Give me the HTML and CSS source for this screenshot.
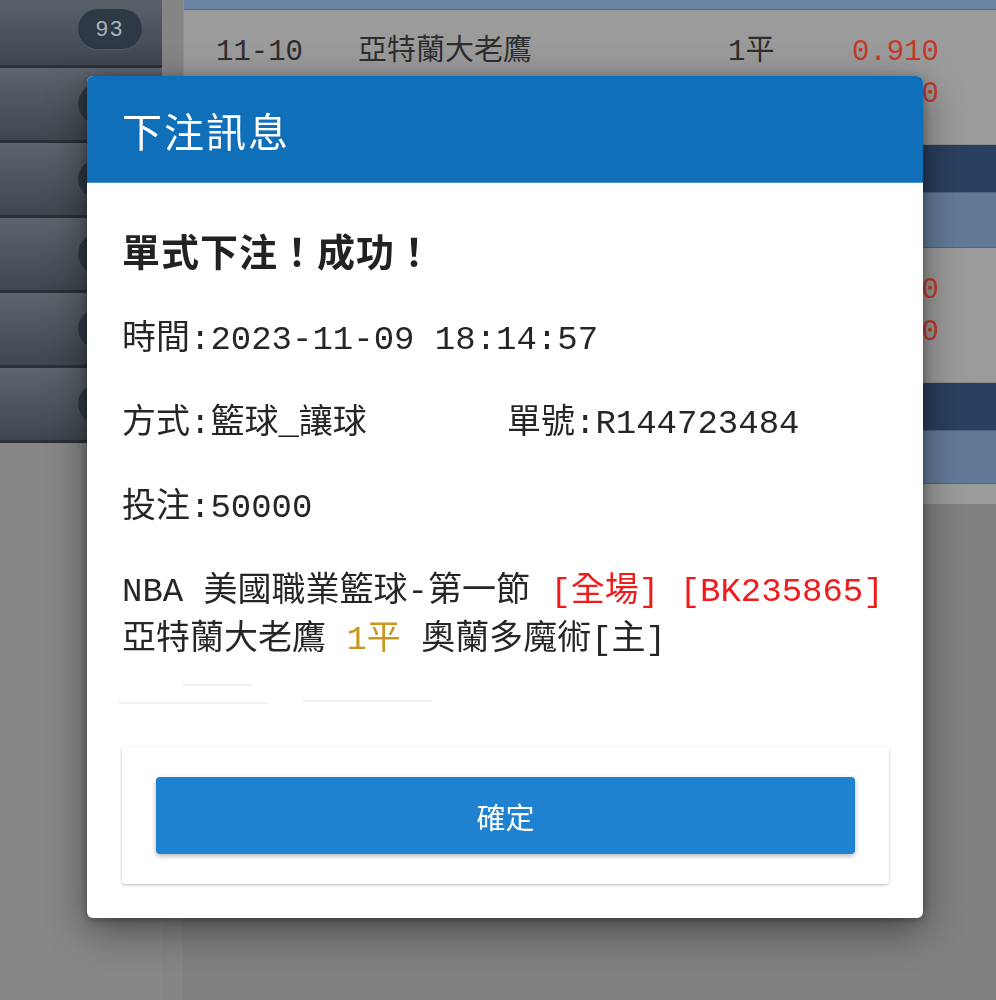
FILE: index.html
```html
<!DOCTYPE html>
<html lang="zh-Hant">
<head>
<meta charset="utf-8">
<title>下注訊息</title>
<link rel="stylesheet" href="styles.css">
</head>
<body>
<div class="app">
  <aside class="sidebar">
    <ul class="menu">
      <li class="menu-item"><span class="badge">93</span></li>
      <li class="menu-item"><span class="badge"></span></li>
      <li class="menu-item"><span class="badge"></span></li>
      <li class="menu-item"><span class="badge"></span></li>
      <li class="menu-item"><span class="badge"></span></li>
      <li class="menu-item"><span class="badge"></span></li>
    </ul>
  </aside>
  <div class="gutter"></div>
  <main class="panel">
    <div class="strip"></div>
    <div class="rows">
      <div class="row"><span>11-10</span><span>亞特蘭大老鷹</span><span>1平</span><span class="odds">0.910</span></div>
      <div class="row"><span></span><span></span><span></span><span class="odds">0.910</span></div>
    </div>
    <div class="league"></div>
    <div class="sub"></div>
    <div class="rows">
      <div class="row"><span></span><span></span><span></span><span class="odds">0.910</span></div>
      <div class="row"><span></span><span></span><span></span><span class="odds">0.910</span></div>
    </div>
    <div class="league"></div>
    <div class="sub sub-b"></div>
    <div class="rows rows-end"></div>
  </main>
</div>

<div class="backdrop">
  <section class="modal">
    <header class="modal-head">
      <h1 class="modal-title">下注訊息</h1>
    </header>
    <div class="modal-body">
      <h2 class="result">單式下注！成功！</h2>
      <p class="line">時間:2023-11-09 18:14:57</p>
      <p class="line two-col"><span class="col">方式:籃球_讓球</span><span class="col">單號:R144723484</span></p>
      <p class="line">投注:50000</p>
      <p class="line detail">NBA 美國職業籃球-第一節 <span class="red">[全場]</span> <span class="red">[BK235865]</span><br>亞特蘭大老鷹 <span class="gold">1平</span> 奧蘭多魔術[主]</p>
      <div class="smudge"><i class="s1"></i><i class="s2"></i><i class="s3"></i></div>
      <div class="actions">
        <button class="btn-ok" type="button">確定</button>
      </div>
    </div>
  </section>
</div>
</body>
</html>
```

FILE: styles.css
```css
* { box-sizing: border-box; }

html, body {
  margin: 0;
  padding: 0;
}

body {
  width: 996px;
  height: 1000px;
  overflow: hidden;
  background: #818181;
  font-family: "Liberation Mono", "Noto Sans CJK TC", monospace;
}

.app {
  display: flex;
  align-items: flex-start;
  height: 1000px;
}

/* ---------- sidebar ---------- */
.sidebar {
  width: 162px;
  flex: 0 0 162px;
  height: 1000px;
  background: #878787;
  overflow: hidden;
}

.menu {
  list-style: none;
  margin: -7px 0 0 0;
  padding: 0;
}

.menu-item {
  height: 75px;
  display: flex;
  align-items: center;
  justify-content: flex-end;
  padding-right: 20px;
  background: linear-gradient(#5d646d, #3f464f);
  border-bottom: 3px solid #2b3139;
}

.badge {
  width: 64px;
  height: 40px;
  border-radius: 20px;
  background: #2e3946;
  color: #a9b3bd;
  font-family: "Liberation Sans", "DejaVu Sans", sans-serif;
  font-size: 22px;
  letter-spacing: 2px;
  display: flex;
  align-items: center;
  justify-content: center;
  box-shadow: 0 1px 0 rgba(255,255,255,0.08);
}

.gutter {
  width: 21px;
  flex: 0 0 21px;
  height: 1000px;
  background: #858585;
}

/* ---------- right panel ---------- */
.panel {
  flex: 1;
  background: #9b9b9b;
  border-left: 1px solid #8f8f8f;
}

.strip {
  height: 10px;
  background: #6b83a2;
  border-bottom: 1px solid #5a6d86;
}

.rows {
  height: 135px;
  padding-top: 22px;
  border-bottom: 1px solid #8a8a8a;
}

.rows-end {
  height: 20px;
  padding: 0;
  border-bottom: none;
}

.row {
  height: 42px;
  display: grid;
  grid-template-columns: 142px 370px 124px auto;
  align-items: center;
  padding-left: 32px;
  font-size: 29px;
  line-height: 42px;
  color: #2e2e2e;
  white-space: nowrap;
}

.odds {
  color: #c43a2b;
}

.league {
  height: 48px;
  background: linear-gradient(90deg, #213656, #2a4060);
  border-bottom: 1px solid #4f6481;
}

.sub {
  height: 55px;
  background: #627a98;
  border-bottom: 1px solid #56657a;
}

.sub-b {
  height: 53px;
}

/* ---------- modal ---------- */
.backdrop {
  position: fixed;
  inset: 0;
}

.modal {
  position: absolute;
  left: 87px;
  top: 76px;
  width: 836px;
  background: #ffffff;
  border-radius: 6px;
  overflow: hidden;
  box-shadow: 0 12px 40px rgba(0, 0, 0, 0.45), 0 2px 8px rgba(0, 0, 0, 0.3);
}

.modal-head {
  height: 107px;
  background: #0f6fb8;
  display: flex;
  align-items: center;
  padding-left: 35px;
  border-bottom: 1px solid #4a93cc;
}

.modal-title {
  margin: 0;
  color: #ffffff;
  font-family: "Noto Sans CJK TC", sans-serif;
  font-weight: 400;
  font-size: 40px;
  letter-spacing: 2px;
  line-height: 50px;
  padding-top: 2px;
}

.modal-body {
  padding: 0 34px 34px 35px;
  color: #262626;
}

.result {
  margin: 42px 0 0 0;
  font-family: "Noto Sans CJK TC", sans-serif;
  font-size: 38px;
  font-weight: 700;
  line-height: 50px;
  letter-spacing: 1px;
  color: #222222;
}

.line {
  margin: 36px 0 0 0;
  font-size: 34px;
  line-height: 48px;
  white-space: nowrap;
}

.result + .line {
  margin-top: 41px;
}

.two-col {
  display: flex;
}

.two-col .col {
  flex: 0 0 385px;
}

.red {
  color: #f01c1c;
}

.gold {
  color: #c8981c;
}

.smudge {
  position: relative;
  height: 43px;
}

.smudge i {
  position: absolute;
  height: 2px;
  background: #f1f1f1;
  border-radius: 1px;
}

.smudge .s1 { left: -4px; top: 38px; width: 150px; }
.smudge .s2 { left: 60px; top: 20px; width: 70px; }
.smudge .s3 { left: 180px; top: 36px; width: 130px; }

.actions {
  margin-top: 40px;
  height: 137px;
  background: #ffffff;
  border-radius: 3px;
  box-shadow: 0 1px 3px rgba(0, 0, 0, 0.28);
  padding: 30px 34px 0 34px;
}

.btn-ok {
  display: block;
  width: 100%;
  height: 77px;
  border: none;
  border-radius: 4px;
  background: #1e82d0;
  color: #ffffff;
  font-family: "Noto Sans CJK TC", sans-serif;
  font-size: 29px;
  font-weight: 400;
  box-shadow: 0 2px 5px rgba(0, 0, 0, 0.3);
}
```
